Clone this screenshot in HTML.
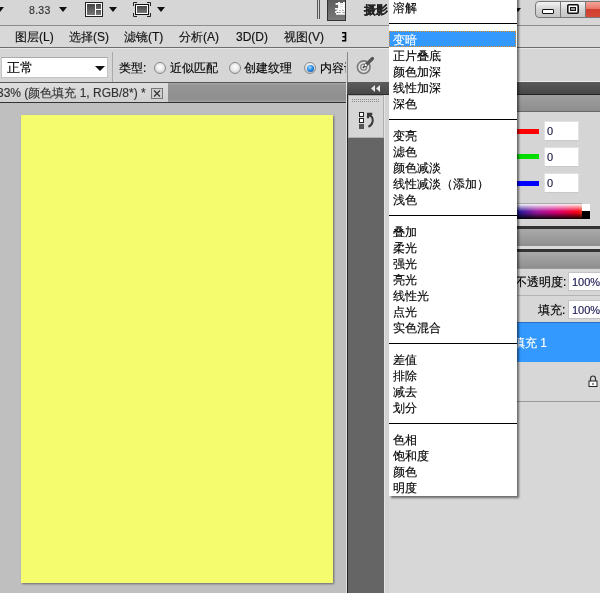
<!DOCTYPE html>
<html><head><meta charset="utf-8">
<style>
*{margin:0;padding:0;box-sizing:border-box}
html,body{width:600px;height:593px;overflow:hidden;background:#d7d7d7;font-family:"Liberation Sans",sans-serif;font-size:12px;color:#000}
.a{position:absolute}
.t{position:absolute;white-space:nowrap;line-height:16px;will-change:transform;-webkit-text-stroke:0.15px currentColor}
.tri{position:absolute;width:0;height:0;border-left:4px solid transparent;border-right:4px solid transparent;border-top:5px solid #111}
</style></head><body>
<!-- top app bar -->
<div class="a" style="left:0;top:0;width:600px;height:25px;background:#d6d6d6"></div>
<div class="a" style="left:0;top:25px;width:600px;height:1px;background:#8c8c8c"></div>
<div class="tri" style="left:-4px;top:7px"></div>
<div class="t" style="left:29px;top:2px;font-size:10.5px;letter-spacing:.3px;color:#333">8.33</div>
<div class="tri" style="left:59px;top:7px"></div>
<!-- arrange icon -->
<div class="a" style="left:85px;top:2px;width:18px;height:15px;border:1px solid #222;background:#fff"></div>
<div class="a" style="left:87px;top:4px;width:8px;height:11px;background:linear-gradient(#444,#777)"></div>
<div class="a" style="left:96px;top:4px;width:5px;height:5px;background:linear-gradient(#444,#666)"></div>
<div class="a" style="left:96px;top:10px;width:5px;height:5px;background:linear-gradient(#555,#777)"></div>
<div class="tri" style="left:109px;top:7px"></div>
<!-- screen mode icon -->
<svg class="a" style="left:133px;top:2px" width="18" height="15" viewBox="0 0 18 15"><path d="M0.5 4 V0.5 H4 M14 0.5 H17.5 V4 M17.5 11 V14.5 H14 M4 14.5 H0.5 V11" fill="none" stroke="#222" stroke-width="1"/></svg>
<div class="a" style="left:135px;top:4px;width:14px;height:11px;border:1px solid #111;background:#fff"></div>
<div class="a" style="left:137px;top:6px;width:10px;height:7px;background:linear-gradient(#444,#777)"></div>
<div class="tri" style="left:157px;top:7px"></div>
<!-- double bars -->
<div class="a" style="left:317px;top:0;width:1px;height:19px;background:#555"></div>
<div class="a" style="left:319px;top:0;width:1px;height:19px;background:#555"></div>
<!-- 基 button -->
<div class="a" style="left:327px;top:-2px;width:19px;height:23px;border:1px solid #333;background:linear-gradient(#5a5a5a,#7a7a7a);overflow:hidden"><div class="t" style="left:7px;top:2px;color:#fff;font-weight:bold;font-size:13px">基</div></div>
<div class="t" style="left:364px;top:2px;font-weight:bold;color:#222">摄影</div>
<!-- window buttons -->
<div class="tri" style="left:515px;top:8px;border-left-width:3px;border-right-width:3px;border-top-width:4px"></div>
<div class="a" style="left:535px;top:1px;width:26px;height:17px;border:1px solid #777;border-radius:4px 0 0 4px;background:linear-gradient(#f4f4f4,#d4d4d4 50%,#c4c4c4)"></div>
<div class="a" style="left:542px;top:9px;width:12px;height:5px;border:1px solid #111;background:#fff;border-radius:1px"></div>
<div class="a" style="left:560px;top:1px;width:26px;height:17px;border:1px solid #777;background:linear-gradient(#f4f4f4,#d4d4d4 50%,#c4c4c4)"></div>
<svg class="a" style="left:567px;top:4px" width="12" height="10" viewBox="0 0 12 10"><rect x="0.8" y="0.8" width="10.4" height="8.4" rx="1" fill="#fff" stroke="#111" stroke-width="1.6"/><rect x="3.5" y="3.5" width="5" height="3" fill="#999" stroke="#111" stroke-width="1"/></svg>
<div class="a" style="left:585px;top:1px;width:20px;height:17px;border:1px solid #777;background:linear-gradient(#f4a49a,#e87868 45%,#d04030 50%,#d84a38)"></div>
<!-- menu bar -->
<div class="a" style="left:0;top:26px;width:600px;height:21px;background:#d8d8d8"></div>
<div class="a" style="left:0;top:47px;width:600px;height:1px;background:#6e6e6e"></div>
<div class="a" style="left:0;top:48px;width:600px;height:1px;background:#e6e6e6"></div>
<div class="t" style="left:15px;top:29px;color:#111">图层(L)</div>
<div class="t" style="left:69px;top:29px;color:#111">选择(S)</div>
<div class="t" style="left:124px;top:29px;color:#111">滤镜(T)</div>
<div class="t" style="left:179px;top:29px;color:#111">分析(A)</div>
<div class="t" style="left:236px;top:29px;color:#111">3D(D)</div>
<div class="t" style="left:284px;top:29px;color:#111">视图(V)</div>
<svg class="a" style="left:341px;top:32px" width="6" height="10" viewBox="0 0 6 10"><path d="M1 0.8 H5 M1.5 4.8 H5 M1 8.8 H5 M4.5 0 V9.5" stroke="#000" stroke-width="1.6" fill="none"/></svg>

<!-- options bar -->
<div class="a" style="left:0;top:49px;width:600px;height:33px;background:#d6d6d6"></div>
<div class="a" style="left:0;top:82px;width:347px;height:1px;background:#555"></div>
<div class="a" style="left:1px;top:57px;width:107px;height:21px;background:#fff;border:1px solid #c4c4c4;border-top-color:#a8a8a8"></div>
<div class="t" style="left:7px;top:60px;font-size:13px">正常</div>
<div class="tri" style="left:95px;top:66px;border-left-width:5px;border-right-width:5px;border-top-width:5px"></div>
<div class="a" style="left:112px;top:52px;width:1px;height:30px;background:#aaa"></div>
<div class="t" style="left:119px;top:60px;font-size:12px">类型:</div>
<div class="a" style="left:154px;top:62px;width:12px;height:12px;border-radius:50%;border:1px solid #8a8a8a;background:radial-gradient(circle at 50% 40%,#fff,#e8e8e8 50%,#b8b8b8)"></div>
<div class="t" style="left:170px;top:60px;font-size:12px">近似匹配</div>
<div class="a" style="left:229px;top:62px;width:12px;height:12px;border-radius:50%;border:1px solid #8a8a8a;background:radial-gradient(circle at 50% 40%,#fff,#e8e8e8 50%,#b8b8b8)"></div>
<div class="t" style="left:244px;top:60px;font-size:12px">创建纹理</div>
<div class="a" style="left:304px;top:62px;width:12px;height:12px;border-radius:50%;border:1px solid #8a8a8a;background:linear-gradient(#f4f4f4,#c8c8c8)"></div><div class="a" style="left:306.5px;top:64.5px;width:7px;height:7px;border-radius:50%;background:radial-gradient(circle at 40% 35%,#a8dcff,#2a8ee8 45%,#0a4a98)"></div>
<div class="a" style="left:320px;top:59px;width:26px;height:16px;overflow:hidden"><div class="t" style="left:0;top:1px;font-size:12px">内容识别</div></div>
<div class="a" style="left:347px;top:52px;width:1px;height:31px;background:#888"></div>
<!-- brush icon -->
<svg class="a" style="left:353px;top:54px" width="24" height="24" viewBox="0 0 24 24">
<circle cx="10.7" cy="13.2" r="6.3" fill="#e2e2e2" stroke="#7a7a7a" stroke-width="1.6"/>
<circle cx="10.7" cy="13.2" r="3" fill="none" stroke="#888" stroke-width="1.3"/>
<path d="M12.5 11.5 L19.5 4.5" stroke="#555" stroke-width="3.2" stroke-linecap="round"/>
<path d="M10 14 L12.5 11" stroke="#444" stroke-width="1.5"/>
<circle cx="12.7" cy="11.2" r="1.1" fill="#fff"/>
</svg>
<!-- doc tab row -->
<div class="a" style="left:0;top:83px;width:347px;height:19px;background:linear-gradient(#a8a8a8,#969696 12%,#8e8e8e 85%,#a2a2a2)"></div>
<div class="a" style="left:0;top:83px;width:168px;height:19px;background:linear-gradient(#dedede,#d0d0d0)"></div>
<div class="t" style="left:-3px;top:85px;color:#333">33% (颜色填充 1, RGB/8*) *</div>
<svg class="a" style="left:151px;top:88px" width="12" height="11" viewBox="0 0 12 11"><rect x="0.5" y="0.5" width="11" height="10" fill="#d0d0d0" stroke="#777"/><path d="M3 2.5 L9 8.5 M9 2.5 L3 8.5" stroke="#333" stroke-width="1.2"/></svg>
<div class="a" style="left:0;top:102px;width:347px;height:1px;background:#333"></div>

<!-- canvas -->
<div class="a" style="left:0;top:103px;width:346px;height:490px;background:#bfbfbf"></div>
<div class="a" style="left:21px;top:115px;width:312px;height:468px;background:#f5fd6e;box-shadow:1px 1px 2px rgba(0,0,0,.45)"></div>
<div class="a" style="left:346px;top:82px;width:1px;height:511px;background:#e0e0e0"></div>
<div class="a" style="left:347px;top:82px;width:1px;height:511px;background:#222"></div>

<!-- dark panel strip -->
<div class="a" style="left:348px;top:82px;width:36px;height:511px;background:#656565"></div>
<div class="a" style="left:384px;top:95px;width:1px;height:498px;background:#e4e4e4"></div>
<div class="a" style="left:385px;top:95px;width:4px;height:498px;background:#d2d2d2"></div>
<div class="a" style="left:347px;top:82px;width:42px;height:12px;background:linear-gradient(#5c5c5c,#484848)"></div>
<div class="a" style="left:347px;top:94px;width:42px;height:1px;background:#2a2a2a"></div>
<svg class="a" style="left:371px;top:85px" width="10" height="7" viewBox="0 0 10 7"><path d="M4 0 L0 3.5 L4 7 Z M9 0 L5 3.5 L9 7 Z" fill="#e8e8e8"/></svg>
<div class="a" style="left:348px;top:95px;width:36px;height:43px;background:#d6d6d6;border:1px solid #b0b0b0"></div>
<div class="a" style="left:352px;top:99px;width:28px;height:1px;background:repeating-linear-gradient(90deg,#8a8a8a 0 1px,transparent 1px 2px)"></div>
<div class="a" style="left:352px;top:101px;width:28px;height:1px;background:repeating-linear-gradient(90deg,#8a8a8a 0 1px,transparent 1px 2px)"></div>
<div class="a" style="left:359px;top:112px;width:5px;height:5px;border:1px solid #222;background:#fff"></div>
<div class="a" style="left:359px;top:118px;width:5px;height:5px;border:1px solid #222;background:#fff"></div>
<div class="a" style="left:359px;top:124px;width:5px;height:5px;background:#555"></div>
<svg class="a" style="left:364px;top:111px" width="10" height="18" viewBox="0 0 10 18"><path d="M3 1.8 H8.3 V4 H5.2 V7.2 H3 Z" fill="#3a3a3a"/><path d="M5 4 Q9.3 5.5 8.6 10.5 Q7.9 14.5 4.4 15.8" fill="none" stroke="#3a3a3a" stroke-width="2"/></svg>
<!-- right panels -->
<div class="a" style="left:517px;top:81px;width:83px;height:1px;background:#ececec"></div>
<div class="a" style="left:517px;top:82px;width:83px;height:13px;background:linear-gradient(#5a5a5a,#454545)"></div>
<div class="a" style="left:517px;top:94px;width:83px;height:1px;background:#222"></div>
<div class="a" style="left:517px;top:95px;width:83px;height:17px;background:linear-gradient(#a0a0a0,#8c8c8c)"></div>
<div class="a" style="left:517px;top:111px;width:83px;height:1px;background:#666"></div>
<div class="a" style="left:517px;top:112px;width:83px;height:114px;background:#d5d5d5"></div>
<div class="a" style="left:517px;top:129px;width:22px;height:5px;background:#f00"></div>
<div class="a" style="left:544px;top:121px;width:35px;height:20px;background:#fff;border:1px solid #e2e2e2;border-bottom-color:#c8c8c8"></div>
<div class="t" style="left:547px;top:123px;font-size:11px;color:#151540">0</div>
<div class="a" style="left:517px;top:154px;width:22px;height:5px;background:#0d0"></div>
<div class="a" style="left:544px;top:147px;width:35px;height:20px;background:#fff;border:1px solid #e2e2e2;border-bottom-color:#c8c8c8"></div>
<div class="t" style="left:547px;top:149px;font-size:11px;color:#151540">0</div>
<div class="a" style="left:517px;top:181px;width:22px;height:5px;background:#00f"></div>
<div class="a" style="left:544px;top:173px;width:35px;height:20px;background:#fff;border:1px solid #e2e2e2;border-bottom-color:#c8c8c8"></div>
<div class="t" style="left:547px;top:175px;font-size:11px;color:#151540">0</div>
<div class="a" style="left:517px;top:203px;width:65px;height:16px;background:linear-gradient(rgba(255,255,255,.95),rgba(255,255,255,0) 50%,rgba(0,0,0,0) 55%,rgba(0,0,0,.95)),linear-gradient(90deg,#1a1a9a,#9a1aa0 30%,#d8007a 60%,#ff0010 95%,#e04020);border-top:1px solid #aaa"></div>
<div class="a" style="left:582px;top:204px;width:8px;height:7px;background:#fff"></div>
<div class="a" style="left:582px;top:211px;width:8px;height:8px;background:#000"></div>
<div class="a" style="left:517px;top:226px;width:83px;height:3px;background:#333"></div>
<div class="a" style="left:517px;top:229px;width:83px;height:17px;background:linear-gradient(#aaaaaa,#8e8e8e)"></div>
<div class="a" style="left:517px;top:246px;width:83px;height:3px;background:#dadada"></div>
<div class="a" style="left:517px;top:249px;width:83px;height:3px;background:#333"></div>
<div class="a" style="left:517px;top:252px;width:83px;height:16px;background:linear-gradient(#aaaaaa,#8e8e8e)"></div>
<div class="a" style="left:517px;top:268px;width:83px;height:1px;background:#999"></div>
<div class="a" style="left:517px;top:269px;width:83px;height:324px;background:#d7d7d7"></div>
<div class="t" style="left:515px;top:274px;font-size:12px">不透明度:</div>
<div class="a" style="left:568px;top:272px;width:40px;height:19px;background:#fff;border:1px solid #c4c4c4"></div>
<div class="t" style="left:572px;top:274px;font-size:11px;color:#1a1a50">100%</div>
<div class="a" style="left:517px;top:295px;width:83px;height:1px;background:#b4b4b4"></div>
<div class="t" style="left:538px;top:302px;font-size:12px">填充:</div>
<div class="a" style="left:568px;top:300px;width:40px;height:19px;background:#fff;border:1px solid #c4c4c4"></div>
<div class="t" style="left:572px;top:302px;font-size:11px;color:#1a1a50">100%</div>
<div class="a" style="left:517px;top:322px;width:83px;height:40px;background:#3399ff;border-top:1px solid #2a70c0"></div>
<div class="t" style="left:513px;top:335px;font-size:12px;color:#fff">填充 1</div>
<svg class="a" style="left:588px;top:375px" width="10" height="12" viewBox="0 0 10 12"><path d="M2.5 6 V3.5 A2.5 2.5 0 0 1 7.5 3.5 V6" fill="none" stroke="#333" stroke-width="1.2"/><rect x="1" y="6" width="8" height="5.5" fill="#fff" stroke="#222" stroke-width="1"/><rect x="4.5" y="8" width="1" height="2" fill="#222"/></svg>
<div class="a" style="left:517px;top:401px;width:83px;height:1px;background:#999"></div>

<!-- dropdown menu -->
<div class="a" style="left:389px;top:-20px;width:128px;height:516px;background:#fff;box-shadow:2px 2px 2px rgba(0,0,0,.5)"></div>
<div class="t" style="left:393px;top:0px">溶解</div>
<div class="a" style="left:389px;top:23px;width:128px;height:1px;background:#000"></div>
<div class="a" style="left:389px;top:31px;width:127px;height:16px;background:#3399ff;outline:1px dotted #e08a2a;outline-offset:-1px"></div>
<div class="t" style="left:393px;top:32px;color:#fff">变暗</div>
<div class="t" style="left:393px;top:48px">正片叠底</div>
<div class="t" style="left:393px;top:64px">颜色加深</div>
<div class="t" style="left:393px;top:80px">线性加深</div>
<div class="t" style="left:393px;top:96px">深色</div>
<div class="a" style="left:389px;top:119px;width:128px;height:1px;background:#000"></div>
<div class="t" style="left:393px;top:128px">变亮</div>
<div class="t" style="left:393px;top:144px">滤色</div>
<div class="t" style="left:393px;top:160px">颜色减淡</div>
<div class="t" style="left:393px;top:176px">线性减淡（添加）</div>
<div class="t" style="left:393px;top:192px">浅色</div>
<div class="a" style="left:389px;top:215px;width:128px;height:1px;background:#000"></div>
<div class="t" style="left:393px;top:224px">叠加</div>
<div class="t" style="left:393px;top:240px">柔光</div>
<div class="t" style="left:393px;top:256px">强光</div>
<div class="t" style="left:393px;top:272px">亮光</div>
<div class="t" style="left:393px;top:288px">线性光</div>
<div class="t" style="left:393px;top:304px">点光</div>
<div class="t" style="left:393px;top:320px">实色混合</div>
<div class="a" style="left:389px;top:343px;width:128px;height:1px;background:#000"></div>
<div class="t" style="left:393px;top:352px">差值</div>
<div class="t" style="left:393px;top:368px">排除</div>
<div class="t" style="left:393px;top:384px">减去</div>
<div class="t" style="left:393px;top:400px">划分</div>
<div class="a" style="left:389px;top:423px;width:128px;height:1px;background:#000"></div>
<div class="t" style="left:393px;top:432px">色相</div>
<div class="t" style="left:393px;top:448px">饱和度</div>
<div class="t" style="left:393px;top:464px">颜色</div>
<div class="t" style="left:393px;top:480px">明度</div>
</body></html>
